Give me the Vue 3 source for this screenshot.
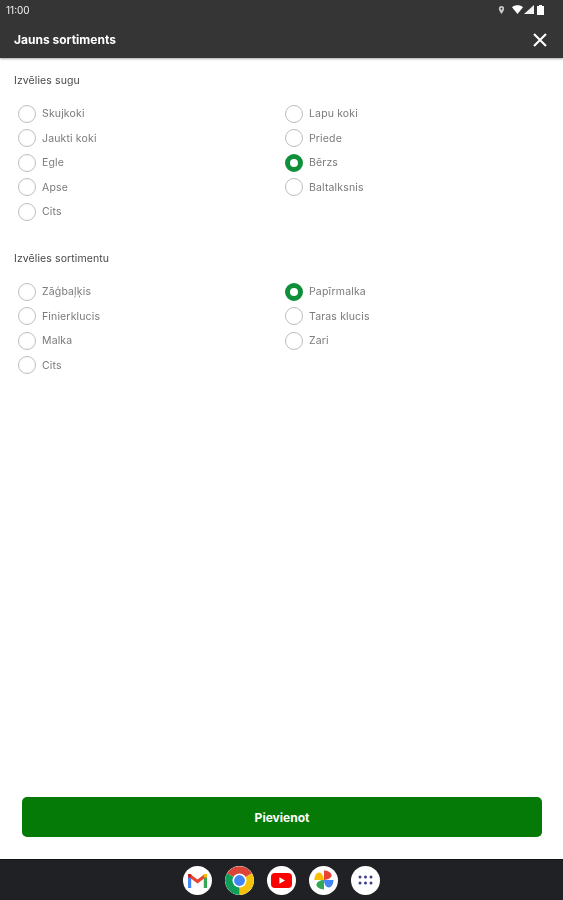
<script setup>
const sections = [
  { title: 'Izvēlies sugu', items: [
    ['Skujkoki', false], ['Lapu koki', false], ['Jaukti koki', false], ['Priede', false],
    ['Egle', false], ['Bērzs', true], ['Apse', false], ['Baltalksnis', false], ['Cits', false],
  ] },
  { title: 'Izvēlies sortimentu', items: [
    ['Zāģbaļķis', false], ['Papīrmalka', true], ['Finierklucis', false], ['Taras klucis', false],
    ['Malka', false], ['Zari', false], ['Cits', false],
  ] },
]
</script>

<template>
  <div class="screen">
    <header class="top">
      <div class="status">
        <span class="time">11:00</span>
        <div class="status-icons">
          <svg class="pin" width="7" height="10" viewBox="0 0 8 10"><path d="M4 0.5a3 3 0 0 0-3 3c0 2.2 3 6 3 6s3-3.8 3-6a3 3 0 0 0-3-3z" fill="#c9c9c9"/><circle cx="4" cy="3.5" r="1.1" fill="#353535"/></svg>
          <svg width="11" height="9" viewBox="0 0 11 9"><path d="M0 2.2C3.2-.4 7.8-.4 11 2.2L5.5 9z" fill="#fff"/></svg>
          <svg width="10" height="9" viewBox="0 0 10 9"><path d="M10 0v9H0z" fill="#f2f2f2"/></svg>
          <svg class="batt" width="7" height="10" viewBox="0 0 7 10"><path d="M2 0h3v1h2v9H0V1h2z" fill="#fff"/></svg>
        </div>
      </div>
      <div class="bar">
        <span class="heading">Jauns sortiments</span>
        <svg class="close" width="14" height="14" viewBox="0 0 14 14"><path d="M1 1l12 12M13 1L1 13" stroke="#fff" stroke-width="2.1" fill="none"/></svg>
      </div>
    </header>

    <main class="body">
      <section v-for="s in sections" :key="s.title" class="section">
        <h2 class="title">{{ s.title }}</h2>
        <div class="grid">
          <div v-for="(it, i) in s.items" :key="i" class="opt">
            <span class="radio" :class="{ on: it[1] }"></span>
            <span class="label">{{ it[0] }}</span>
          </div>
        </div>
      </section>
    </main>

    <div class="action">
      <button class="add">Pievienot</button>
    </div>

    <nav class="dock">
      <span class="app">
        <svg width="19" height="15" viewBox="0 0 19 15">
          <path d="M1.6 15V3.5" stroke="#4285f4" stroke-width="3.2"/>
          <path d="M17.4 15V3.5" stroke="#34a853" stroke-width="3.2"/>
          <path d="M1.2 2.2l8.3 6.3 8.3-6.3" stroke="#ea4335" stroke-width="3.2" fill="none"/>
          <path d="M17.4 1v3.4" stroke="#fbbc04" stroke-width="3.2"/>
          <path d="M1.6 1v3.4" stroke="#c5221f" stroke-width="3.2"/>
        </svg>
      </span>
      <span class="app chrome">
        <svg width="29" height="29" viewBox="0 0 29 29">
          <path d="M14.5 14.5L2 7.3A14.5 14.5 0 0 1 27 7.3z" fill="#db4437"/>
          <path d="M14.5 14.5L27 7.3A14.5 14.5 0 0 1 14.5 29z" fill="#f4c20d"/>
          <path d="M14.5 14.5V29A14.5 14.5 0 0 1 2 7.3z" fill="#0f9d58"/>
          <circle cx="14.5" cy="14.5" r="7" fill="#fff"/>
          <circle cx="14.5" cy="14.5" r="5.4" fill="#4285f4"/>
        </svg>
      </span>
      <span class="app">
        <svg width="21" height="15" viewBox="0 0 21 15">
          <rect width="21" height="15" rx="4" fill="#f00"/>
          <path d="M8.4 4.2v6.6l5.6-3.3z" fill="#fff"/>
        </svg>
      </span>
      <span class="app">
        <svg width="20" height="20" viewBox="0 0 20 20">
          <path d="M0.5 10a4.75 4.75 0 0 1 9.5 0z" fill="#fbbc04" transform="translate(-0.25 0) scale(1 1.6) translate(0 -3.75)"/>
          <path d="M10 0.5a4.75 4.75 0 0 1 0 9.5z" fill="#ea4335" transform="translate(10 0) scale(1.6 1) translate(-10 0)"/>
          <path d="M10 10h9.5a4.75 4.75 0 0 1-9.5 0z" fill="#4285f4" transform="translate(0 10) scale(1 1.6) translate(0 -10)"/>
          <path d="M10 10v9.5a4.75 4.75 0 0 1 0-9.5z" fill="#34a853" transform="translate(10 0) scale(1.6 1) translate(-10 0)"/>
        </svg>
      </span>
      <span class="app">
        <svg width="15" height="11" viewBox="0 0 15 11" fill="#3c3f8f">
          <circle cx="2" cy="2" r="1.5"/><circle cx="7.5" cy="2" r="1.5"/><circle cx="13" cy="2" r="1.5"/>
          <circle cx="2" cy="8" r="1.5"/><circle cx="7.5" cy="8" r="1.5"/><circle cx="13" cy="8" r="1.5"/>
        </svg>
      </span>
    </nav>
  </div>
</template>

<style>
html, body { margin: 0; background: #fff; }
</style>

<style scoped>
.screen {
  width: 563px;
  height: 900px;
  display: flex;
  flex-direction: column;
  font-family: "Inter", "Liberation Sans", sans-serif;
  overflow: hidden;
  background: #fff;
}
.top {
  height: 58px;
  background: #353535;
  box-shadow: 0 1px 2px rgba(0, 0, 0, 0.35);
  flex: none;
  position: relative;
}
.status {
  height: 19px;
  display: flex;
  align-items: center;
  justify-content: space-between;
  padding: 0 19px 0 6px;
}
.time {
  color: #f2f2f2;
  font-size: 10px;
  filter: blur(0.3px);
}
.status-icons {
  display: flex;
  align-items: center;
  gap: 1px;
}
.pin { margin-right: 6px; }
.batt { margin-left: 2px; }
.bar {
  height: 39px;
  display: flex;
  align-items: center;
  justify-content: space-between;
  padding: 2px 16px 0 14px;
  box-sizing: border-box;
}
.heading {
  color: #fff;
  font-size: 12px;
  font-weight: 700;
  filter: blur(0.3px);
}
.body {
  flex: 1;
  padding: 16px 0 0 14px;
}
.section + .section { margin-top: 28.25px; }
.title {
  margin: 0;
  height: 14px;
  line-height: 14px;
  font-size: 10.5px;
  font-weight: 400;
  color: #484848;
  letter-spacing: 0.1px;
  filter: blur(0.4px);
}
.grid {
  display: grid;
  grid-template-columns: 267px 267px;
  grid-auto-rows: 24.5px;
  margin-top: 13.25px;
  padding-left: 4px;
}
.opt {
  display: flex;
  align-items: center;
  gap: 6px;
}
.radio {
  width: 18px;
  height: 18px;
  box-sizing: border-box;
  border: 1.5px solid #bdbdbd;
  border-radius: 50%;
  flex: none;
}
.radio.on {
  border: 5.5px solid #0f8f3a;
  background: #fff;
}
.label {
  font-size: 10.5px;
  letter-spacing: 0.15px;
  color: #7a7a7a;
  filter: blur(0.4px);
}
.action {
  flex: none;
  height: 62px;
  padding: 0 21px 0 22px;
}
.add {
  width: 100%;
  height: 40px;
  display: block;
  border: 0;
  border-radius: 5px;
  background: #067a06;
  color: #fff;
  font-family: inherit;
  font-size: 12px;
  font-weight: 700;
}
.dock {
  flex: none;
  height: 41px;
  background: #202124;
  border-top: 1px solid #111;
  box-sizing: border-box;
  display: flex;
  align-items: center;
  justify-content: center;
  gap: 13px;
}
.app {
  width: 29px;
  height: 29px;
  border-radius: 50%;
  background: #fff;
  display: flex;
  align-items: center;
  justify-content: center;
  overflow: hidden;
  filter: blur(0.3px);
}
</style>
